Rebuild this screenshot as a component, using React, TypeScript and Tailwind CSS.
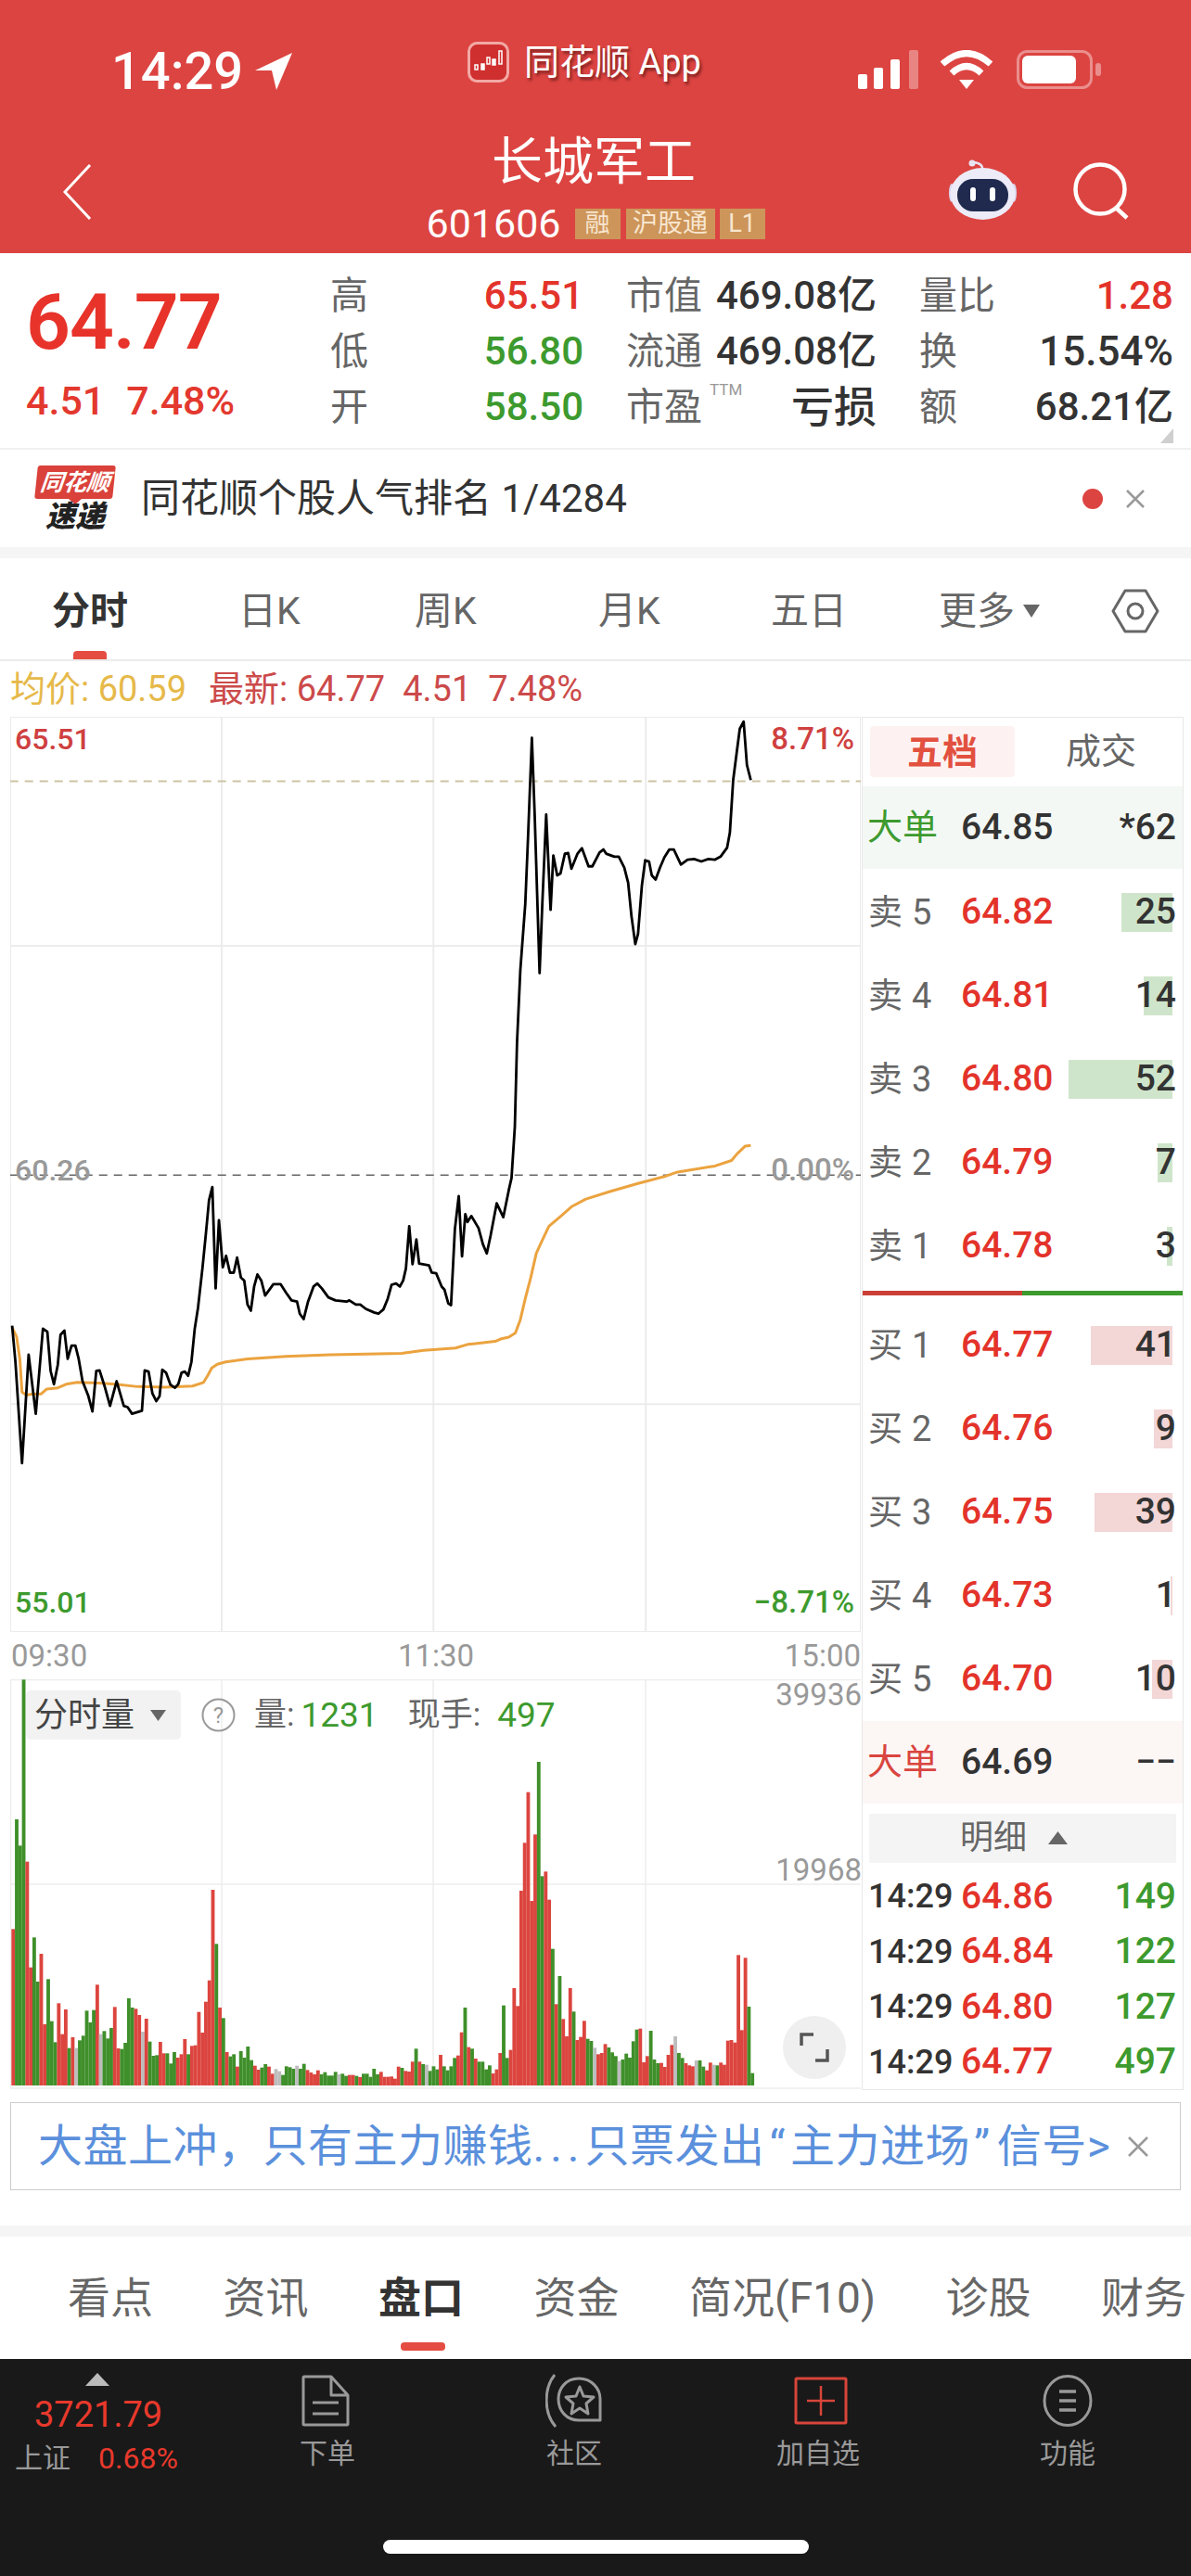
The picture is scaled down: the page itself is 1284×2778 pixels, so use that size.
import React from "react";

const priceLine =
  "22,1030 28,1090 40,1258 52,1078 65,1176 78,1035 86,1040 92,1105 98,1127 105,1095 110,1045 117,1038 123,1085 130,1063 137,1063 143,1085 150,1122 160,1145 168,1172 175,1105 181,1104 190,1130 200,1163 212,1122 225,1163 232,1165 240,1176 258,1171 263,1104 270,1106 277,1142 284,1155 290,1147 295,1103 302,1108 310,1128 318,1133 324,1127 330,1108 336,1106 342,1113 348,1090 354,1035 360,1000 368,935 374,880 380,822 386,800 392,968 398,855 405,933 411,914 418,942 425,942 431,917 438,950 444,955 450,995 456,1005 462,965 468,945 475,955 482,980 490,970 497,961 510,961 520,975 530,988 540,990 545,1010 552,1019 560,990 570,965 577,960 585,968 597,983 610,988 630,990 635,988 647,995 655,995 665,1002 680,1008 688,1010 697,1003 705,985 712,962 720,960 727,965 733,955 738,935 744,865 750,928 757,887 762,927 780,930 785,942 793,943 803,965 808,970 815,993 820,996 827,870 834,815 840,915 846,845 850,858 857,848 870,868 878,895 885,910 892,880 903,827 915,850 925,805 930,785 936,700 940,560 946,440 955,330 960,220 967,55 972,180 981,445 986,330 993,182 1001,340 1006,250 1013,283 1019,280 1027,247 1033,246 1039,272 1050,247 1058,238 1070,268 1077,268 1090,245 1097,240 1102,247 1117,252 1125,252 1135,270 1142,295 1148,350 1155,397 1160,380 1167,300 1173,258 1180,260 1185,283 1192,290 1200,270 1208,253 1217,240 1225,240 1238,265 1250,257 1262,256 1275,260 1288,256 1300,257 1310,252 1322,237 1327,212 1333,125 1340,75 1345,40 1352,28 1358,100 1365,125";
const avgLine =
  "22,1033 30,1048 36,1085 40,1140 48,1145 60,1143 75,1143 85,1135 105,1133 120,1127 140,1124 180,1125 210,1127 250,1131 300,1132 350,1130 370,1124 378,1112 385,1100 395,1094 410,1090 450,1085 520,1081 600,1078 730,1076 770,1071 828,1067 850,1061 900,1056 910,1052 925,1049 937,1042 946,1020 955,985 965,950 975,910 985,890 998,865 1020,848 1040,832 1065,820 1110,807 1160,794 1210,782 1232,775 1300,765 1330,756 1340,745 1355,732 1365,731";

const volA =
  "r360 g5 g90 g-447 r142 r484 g387 g530 r440 r668 g522 g658 g726 r600 r700 r620 g745 r710 x745 g720 g705 g624 g662 g622 r540 x700 g690 g714 g680 r612 r746 g748 g728 g584 g614 r618 r638 x692 r650 g724 g770 g768 r725 r762 g762 g795 g758 r776 r765 r716 g765 r738 r736 r628 r695 r595 r526 r233 g408 r614 g648 r758 g772 g765 r805 g755 g776 g740 g784 r802 r815 g808 g797 r805 r828 x813 x820 g832 g804 g807 g812 x802 g812 g796 r816 r824 r830 r817 g830 g823 g834 g834 g822 x830 g828 g835 r832 r832 g835 r839 g828 g828 g838 g812 g830 r822 r838 r838";
const volB =
  "r1048 r1055 r1016 g1020 r1030 r1032 r1000 g958 r1000 g1008 x1010 g1030 g1015 g1025 r978 g1015 g1028 g1015 g988 r980 r905 g825 r953 g958 r990 g1000 g1000 g1025 g1012 r1038 r1025 r972 g818 g988 r962 r762 r820 r447 r292 r128 r480 r265 g30 g400 r385 r476 g635 r814 g723 r862 r918 r762 g838 r930 r920 r868 g926 g933 x955 r976 r972 r943 g954 g970 g982 x998 g993 g974 g987 g934 g896 r893 r1002 r982 g900 g993 g1005 r1004 r1017 r978 r946 x918 g972 g988 r1005 r1012 r1015 x996 g996 g1016 r1028 r1003 x1010 g1012 r1003 r1010 r932 r930 r938 r655 r898 r664 g822 g1037";

const parseBars = (s: string, base: number) =>
  s.split(" ").map((t) => ({ k: t[0], h: (base - Number(t.slice(1))) / 3 }));
const bars = [...parseBars(volA, 866), ...parseBars(volB, 1077)];
const barColor: Record<string, string> = { r: "#dc453f", g: "#3f8f2a", x: "#bdbdbd" };

const Chart = () => (
  <svg width="917" height="987" viewBox="18.5 20 1546.5 1518" preserveAspectRatio="none" className="block">
    <g fill="none" stroke="#ececec" strokeWidth="2">
      <rect x="18.5" y="20" width="1546.5" height="1518" vectorEffect="non-scaling-stroke" />
      <line x1="403" y1="20" x2="403" y2="1538" vectorEffect="non-scaling-stroke" />
      <line x1="788" y1="20" x2="788" y2="1538" vectorEffect="non-scaling-stroke" />
      <line x1="1174" y1="20" x2="1174" y2="1538" vectorEffect="non-scaling-stroke" />
      <line x1="18" y1="400" x2="1565" y2="400" vectorEffect="non-scaling-stroke" />
      <line x1="18" y1="1160" x2="1565" y2="1160" vectorEffect="non-scaling-stroke" />
    </g>
    <line x1="18" y1="127" x2="1565" y2="127" stroke="#cdc3a3" strokeWidth="2" strokeDasharray="9 7" vectorEffect="non-scaling-stroke" />
    <line x1="18" y1="780" x2="1565" y2="780" stroke="#666" strokeWidth="1.5" strokeDasharray="9 7" vectorEffect="non-scaling-stroke" />
    <polyline points={avgLine} fill="none" stroke="#eba33f" strokeWidth="3" strokeLinejoin="round" vectorEffect="non-scaling-stroke" />
    <polyline points={priceLine} fill="none" stroke="#000" strokeWidth="2.8" strokeLinejoin="round" vectorEffect="non-scaling-stroke" />
  </svg>
);

const Volume = () => (
  <svg width="917" height="442" viewBox="0 0 917 442" className="block">
    <g stroke="#ececec" strokeWidth="1.5">
      <line x1="0" y1="0.5" x2="917" y2="0.5" />
      <line x1="0.5" y1="0" x2="0.5" y2="442" />
      <line x1="228" y1="0" x2="228" y2="442" />
      <line x1="456" y1="0" x2="456" y2="442" />
      <line x1="685" y1="0" x2="685" y2="442" />
      <line x1="0" y1="221" x2="917" y2="221" />
      <line x1="0" y1="441" x2="917" y2="441" />
    </g>
    {bars.map((b, i) => (
      <rect key={i} x={1.3 + i * 3.777} y={438 - b.h} width="3.85" height={b.h} fill={barColor[b.k]} />
    ))}
  </svg>
);

type Row = { l: string; n: string; p: string; q: string; w: number };
const sells: Row[] = [
  { l: "卖", n: "5", p: "64.82", q: "25", w: 55 },
  { l: "卖", n: "4", p: "64.81", q: "14", w: 31 },
  { l: "卖", n: "3", p: "64.80", q: "52", w: 112 },
  { l: "卖", n: "2", p: "64.79", q: "7", w: 16 },
  { l: "卖", n: "1", p: "64.78", q: "3", w: 6 },
];
const buys: Row[] = [
  { l: "买", n: "1", p: "64.77", q: "41", w: 88 },
  { l: "买", n: "2", p: "64.76", q: "9", w: 20 },
  { l: "买", n: "3", p: "64.75", q: "39", w: 84 },
  { l: "买", n: "4", p: "64.73", q: "1", w: 2 },
  { l: "买", n: "5", p: "64.70", q: "10", w: 22 },
];

const Depth = ({ r, tone }: { r: Row; tone: "sell" | "buy" }) => (
  <div className="relative flex h-[90px] items-center pl-[6px] pr-[7px]">
    <div
      className={`absolute right-[11px] h-[42px] ${tone === "sell" ? "bg-[#cfe5cb]" : "bg-[#f3d6d6]"}`}
      style={{ width: r.w }}
    />
    <span className="relative w-[100px] text-[37px] leading-none text-[#666]">
      {r.l}
      <span className="ml-[10px] text-[38px]">{r.n}</span>
    </span>
    <span className="relative text-[39px] leading-none font-medium text-[#e3332a]">{r.p}</span>
    <span className="relative ml-auto text-[39px] leading-none font-medium text-[#333]">{r.q}</span>
  </div>
);

const BigRow = ({ color, bg, p, q }: { color: string; bg: string; p: string; q: string }) => (
  <div className={`flex h-[89px] shrink-0 items-center pl-[5px] pr-[7px] ${bg}`}>
    <span className={`w-[101px] text-[38px] leading-none ${color}`}>大单</span>
    <span className="text-[39px] leading-none font-medium text-[#333]">{p}</span>
    <span className="ml-auto text-[39px] leading-none font-medium text-[#333]">{q}</span>
  </div>
);

const Tick = ({ p, q }: { p: string; q: string }) => (
  <div className="flex h-[59.5px] items-center pl-[6px] pr-[7px]">
    <span className="w-[100px] text-[36px] leading-none font-medium text-[#333]">14:29</span>
    <span className="text-[39px] leading-none font-medium text-[#e3332a]">{p}</span>
    <span className="ml-auto text-[39px] leading-none font-medium text-[#3d9a2e]">{q}</span>
  </div>
);

const Stat = ({
  label,
  value,
  color,
  size = "text-[42px]",
  extra,
}: {
  label: string;
  value: string;
  color: string;
  size?: string;
  extra?: React.ReactNode;
}) => (
  <div className="relative flex h-[60px] items-center justify-between">
    <span className="text-[41px] leading-none text-[#666]">{label}</span>
    {extra}
    <span className={`leading-none font-medium ${size} ${color}`}>{value}</span>
  </div>
);

const Badge = ({ t, w }: { t: string; w: string }) => (
  <span className={`flex h-[33px] items-center justify-center bg-[#cd955a] text-[27px] leading-none text-[#f8e6cf] ${w}`}>{t}</span>
);

const Logo = () => (
  <svg width="45" height="44" viewBox="0 0 45 44">
    <rect x="1.5" y="1.5" width="42" height="41" rx="9" fill="#cf2f2f" stroke="#f3a9a5" strokeWidth="3" />
    <g fill="none" stroke="#fff" strokeWidth="1.5">
      <rect x="8" y="25" width="3" height="5" />
      <rect x="15" y="24" width="3" height="6" fill="#fff" />
      <rect x="21" y="17" width="3" height="7" />
      <rect x="27" y="19" width="3" height="6" fill="#fff" />
      <rect x="34" y="10" width="3" height="14" />
    </g>
  </svg>
);

const Robot = () => (
  <svg width="73" height="65" viewBox="0 0 73 65">
    <circle cx="25" cy="4" r="3.5" fill="#e8e4f4" />
    <path d="M26 3 Q37 4 36 11" fill="none" stroke="#e8e4f4" strokeWidth="2.5" />
    <ellipse cx="3" cy="36" rx="3" ry="10" fill="#d9d6ee" />
    <ellipse cx="70" cy="36" rx="3" ry="10" fill="#d9d6ee" />
    <ellipse cx="36.5" cy="37" rx="35" ry="28" fill="#ecebf7" />
    <rect x="9" y="21" width="55" height="35" rx="17" fill="#1f2a4e" />
    <rect x="23" y="30" width="6" height="15" rx="3" fill="#fff" />
    <rect x="44" y="30" width="6" height="15" rx="3" fill="#fff" />
  </svg>
);

export default function App() {
  return (
    <div className="flex h-[2778px] w-[1284px] flex-col overflow-hidden bg-white font-[Roboto,'Noto_Sans_CJK_SC',sans-serif]">
      {/* header */}
      <div className="h-[273px] shrink-0 bg-[#dc4441] text-white">
        <div className="flex h-[130px] items-start pl-[120px] pt-[45px]">
          <div className="mt-[12px] flex w-[384px] items-start">
            <span className="text-[56px] leading-[40px] font-medium">14:29</span>
            <svg width="41" height="40" viewBox="0 0 41 40" className="ml-[13px]">
              <polygon points="40,0 0,19 18,19 23,40" fill="#fff" />
            </svg>
          </div>
          <div className="flex w-[421px] items-center">
            <Logo />
            <span className="ml-[16px] text-[38px] leading-[44px] [text-shadow:2px_3px_3px_rgba(90,20,20,.7)]">同花顺 App</span>
          </div>
          <div className="mt-[9px] flex items-start">
            <svg width="66" height="42" viewBox="0 0 66 42">
              <rect x="0" y="26" width="10" height="16" rx="2" fill="#fff" />
              <rect x="17" y="19" width="10" height="23" rx="2" fill="#fff" />
              <rect x="35" y="10" width="10" height="32" rx="2" fill="#fff" />
              <rect x="55" y="0" width="10" height="42" rx="2" fill="#fff" fillOpacity="0.35" />
            </svg>
            <svg width="58" height="42" viewBox="0 0 58 42" className="ml-[22px]">
              <g fill="none" stroke="#fff" strokeWidth="7">
                <path d="M3 15 Q29 -8 55 15" />
                <path d="M13 25 Q29 10 45 25" />
              </g>
              <polygon points="21,32 37,32 29,42" fill="#fff" />
            </svg>
            <svg width="92" height="42" viewBox="0 0 92 42" className="ml-[25px]">
              <rect x="1.5" y="1.5" width="79" height="39" rx="10" fill="none" stroke="#fff" strokeOpacity="0.4" strokeWidth="3" />
              <rect x="6" y="6" width="58" height="30" rx="6" fill="#fff" />
              <rect x="85" y="14" width="6" height="14" rx="3" fill="#fff" fillOpacity="0.4" />
            </svg>
          </div>
        </div>
        <div className="flex h-[143px] items-start">
          <div className="w-[270px] pl-[67px] pt-[47px]">
            <svg width="32" height="60" viewBox="0 0 32 60">
              <polyline points="30,1 3,30 30,59" fill="none" stroke="#fff" strokeWidth="3" />
            </svg>
          </div>
          <div className="flex w-[744px] flex-col items-center pt-[14px]">
            <div className="ml-[-4px] text-[55px] leading-[60px]">长城军工</div>
            <div className="mt-[21px] flex items-center">
              <span className="mr-[15px] text-[43px] leading-[33px]">601606</span>
              <Badge t="融" w="w-[49px]" />
              <span className="w-[6px]" />
              <Badge t="沪股通" w="w-[96px]" />
              <span className="w-[5px]" />
              <Badge t="L1" w="w-[49px]" />
            </div>
          </div>
          <div className="ml-[9px] pt-[42px]">
            <Robot />
          </div>
          <div className="ml-[60px] pt-[45px]">
            <svg width="64" height="62" viewBox="0 0 64 62">
              <circle cx="30" cy="29" r="26.5" fill="none" stroke="#fff" strokeWidth="4.5" />
              <line x1="47" y1="49" x2="59" y2="60" stroke="#fff" strokeWidth="4.5" />
            </svg>
          </div>
        </div>
      </div>

      {/* quote */}
      <div className="flex h-[212px] shrink-0 border-b-2 border-[#f0f0f0]">
        <div className="w-[356px] pl-[28px] pt-[32px]">
          <div className="text-[84px] leading-[86px] font-semibold tracking-[-1px] text-[#e7332a]">64.77</div>
          <div className="mt-[18px] flex text-[43px] leading-[46px] font-medium text-[#e3382e]">
            <span>4.51</span>
            <span className="ml-[23px]">7.48%</span>
          </div>
        </div>
        <div className="grid grid-cols-[273px_270px_274px] content-start gap-x-[46px] pt-[16px]">
          <Stat label="高" value="65.51" color="text-[#e3332a]" />
          <Stat label="市值" value="469.08亿" color="text-[#333]" />
          <Stat label="量比" value="1.28" color="text-[#e3332a]" />
          <Stat label="低" value="56.80" color="text-[#3d9a2e]" />
          <Stat label="流通" value="469.08亿" color="text-[#333]" />
          <Stat label="换" value="15.54%" color="text-[#333]" size="text-[44px]" />
          <Stat label="开" value="58.50" color="text-[#3d9a2e]" />
          <Stat
            label="市盈"
            value="亏损"
            color="text-[#333]"
            size="text-[46px]"
            extra={<span className="absolute left-[90px] top-[3px] text-[17px] leading-none text-[#999]">TTM</span>}
          />
          <Stat label="额" value="68.21亿" color="text-[#333]" />
        </div>
        <div className="relative w-0">
          <svg width="16" height="16" viewBox="0 0 16 16" className="absolute left-[-16px] top-[189px]">
            <polygon points="16,0 16,16 2,16" fill="#cfcfcf" />
          </svg>
        </div>
      </div>

      {/* notification */}
      <div className="flex h-[105px] shrink-0 items-center pl-[37px] pr-[49px]">
        <div className="flex w-[88px] flex-col items-center">
          <div className="flex h-[36px] w-[84px] -skew-x-6 items-center justify-center rounded-[3px] bg-[#d9413a] text-[25px] leading-none font-bold italic text-white">
            同花顺
          </div>
          <div className="h-0 w-0 border-x-[7px] border-t-[6px] border-x-transparent border-t-[#d9413a]" />
          <div className="mt-[-3px] text-[32px] leading-[32px] font-black italic text-[#222]">速递</div>
        </div>
        <span className="ml-[27px] text-[42px] leading-none text-[#333]">同花顺个股人气排名 1/4284</span>
        <span className="ml-auto h-[22px] w-[22px] rounded-full bg-[#dc4441]" />
        <svg width="22" height="22" viewBox="0 0 22 22" className="ml-[24px]">
          <path d="M2 2 L20 20 M20 2 L2 20" stroke="#999" strokeWidth="2.5" />
        </svg>
      </div>
      <div className="h-[12px] shrink-0 bg-[#f5f5f5]" />

      {/* period tabs */}
      <div className="relative flex h-[111px] shrink-0 items-center border-b-2 border-[#ececec] pl-[56px] pt-[5px] text-[41px] leading-none text-[#666]">
        <span className="w-[201px] font-bold text-[#333]">分时</span>
        <span className="w-[190px]">日K</span>
        <span className="w-[198px]">周K</span>
        <span className="w-[186px]">月K</span>
        <span className="w-[181px]">五日</span>
        <span className="flex w-[186px] items-center">
          更多
          <svg width="18" height="14" viewBox="0 0 18 14" className="ml-[9px]">
            <polygon points="0,0 18,0 9,14" fill="#666" />
          </svg>
        </span>
        <svg width="52" height="48" viewBox="0 0 52 48">
          <polygon points="15,2 37,2 50,24 37,46 15,46 2,24" fill="none" stroke="#666" strokeWidth="3" strokeLinejoin="round" />
          <circle cx="26" cy="24" r="8" fill="none" stroke="#666" strokeWidth="3" />
        </svg>
        <span className="absolute bottom-0 left-[79px] h-[9px] w-[36px] rounded-t-[4px] bg-[#e54d42]" />
      </div>

      {/* info line */}
      <div className="flex h-[60px] shrink-0 items-center pl-[11px] text-[38px] leading-none">
        <span className="text-[#e6b94a]">均价: 60.59</span>
        <span className="ml-[24px] text-[#cc4a4a]">最新: 64.77</span>
        <span className="ml-[19px] text-[#cc4a4a]">4.51</span>
        <span className="ml-[18px] text-[#cc4a4a]">7.48%</span>
      </div>

      {/* chart + depth */}
      <div className="flex h-[1481px] shrink-0 pl-[11px]">
        <div className="flex w-[918px] flex-col">
          <div className="relative h-[987px]">
            <Chart />
            <span className="absolute left-[5px] top-[8px] text-[32px] leading-[32px] font-medium text-[#cf4040]">65.51</span>
            <span className="absolute right-[8px] top-[8px] text-[33px] leading-[32px] font-medium text-[#cf4040]">8.71%</span>
            <span className="absolute left-[5px] top-[473px] text-[32px] leading-[32px] font-medium text-[#999]">60.26</span>
            <span className="absolute right-[8px] top-[473px] text-[33px] leading-[32px] font-medium text-[#999]">0.00%</span>
            <span className="absolute left-[5px] top-[939px] text-[32px] leading-[32px] font-medium text-[#3d9a2e]">55.01</span>
            <span className="absolute right-[8px] top-[939px] text-[33px] leading-[32px] font-medium text-[#3d9a2e]">−8.71%</span>
          </div>
          <div className="flex h-[51px] items-center justify-between pl-[1px] pr-[1px] text-[33px] leading-none text-[#999]">
            <span>09:30</span>
            <span>11:30</span>
            <span>15:00</span>
          </div>
          <div className="relative h-[443px]">
            <Volume />
            <div className="absolute left-[17px] top-[12px] flex items-center text-[35px] leading-none text-[#666]">
              <div className="flex h-[53px] w-[167px] items-center rounded-[5px] bg-[#f2f2f2] pl-[9px] text-[#444]">
                <span className="text-[36px]">分时量</span>
                <svg width="17" height="12" viewBox="0 0 17 12" className="ml-[17px]">
                  <polygon points="0,0 17,0 8.5,12" fill="#666" />
                </svg>
              </div>
              <svg width="37" height="37" viewBox="0 0 37 37" className="ml-[22px]">
                <circle cx="18.5" cy="18.5" r="17" fill="none" stroke="#999" strokeWidth="2" />
                <text x="18.5" y="27" textAnchor="middle" fontSize="24" fill="#999">?</text>
              </svg>
              <span className="ml-[20px]">量: </span>
              <span className="ml-[7px] text-[37px] text-[#3d9a2e]">1231</span>
              <span className="ml-[32px]">现手: </span>
              <span className="ml-[18px] text-[37px] text-[#3d9a2e]">497</span>
            </div>
            <span className="absolute right-0 top-0 text-[33px] leading-[34px] text-[#999]">39936</span>
            <span className="absolute right-0 top-[189px] text-[33px] leading-[34px] text-[#999]">19968</span>
            <div className="absolute left-[833px] top-[363px] flex h-[68px] w-[68px] items-center justify-center rounded-full bg-[#efefef]">
              <svg width="32" height="32" viewBox="0 0 32 32">
                <path d="M2 14 V2 H15 M30 18 V30 H17" fill="none" stroke="#555" strokeWidth="3.5" />
              </svg>
            </div>
          </div>
        </div>
        <div className="flex h-[1481px] w-[347px] flex-col overflow-hidden border-[1.5px] border-[#e8e8e8]">
          <div className="flex h-[73.5px] shrink-0 items-start pl-[8px] pt-[9px] text-[38px] leading-none">
            <span className="flex h-[55px] w-[156px] items-center justify-center rounded-[4px] bg-[#fdf2f1] font-bold text-[#e2503f]">五档</span>
            <span className="ml-[55px] mt-[8px] text-[#666]">成交</span>
          </div>
          <BigRow color="text-[#3d9a2e]" bg="bg-[#f3f8f4]" p="64.85" q="*62" />
          <div className="h-[2px] shrink-0" />
          <div className="flex shrink-0 flex-col">
            {sells.map((r) => (
              <Depth key={r.n} r={r} tone="sell" />
            ))}
          </div>
          <div className="mt-[3px] flex h-[5px] shrink-0">
            <div className="w-[172px] bg-[#cc3f36]" />
            <div className="flex-1 bg-[#3d9a2e]" />
          </div>
          <div className="h-[9px] shrink-0" />
          <div className="flex shrink-0 flex-col">
            {buys.map((r) => (
              <Depth key={r.n} r={r} tone="buy" />
            ))}
          </div>
          <BigRow color="text-[#d9453f]" bg="bg-[#fcf6f5]" p="64.69" q="−−" />
          <div className="mx-[7px] mt-[11px] flex h-[53px] shrink-0 items-center rounded-[2px] bg-[#f4f4f4] pl-[98px] text-[36px] leading-none text-[#666]">
            明细
            <svg width="21" height="14" viewBox="0 0 21 14" className="ml-[23px]">
              <polygon points="0,14 21,14 10.5,0" fill="#666" />
            </svg>
          </div>
          <div className="mt-[7px] flex shrink-0 flex-col">
            <Tick p="64.86" q="149" />
            <Tick p="64.84" q="122" />
            <Tick p="64.80" q="127" />
            <Tick p="64.77" q="497" />
          </div>
        </div>
      </div>

      {/* banner */}
      <div className="mx-[11px] mt-[13px] flex h-[95px] shrink-0 items-center border-[1.5px] border-[#cccccc] pl-[29px] pr-[33px] text-[48px] leading-none text-[#5b90dc]">
        <span className="whitespace-nowrap tracking-[0.5px]">
          大盘上冲，只有主力赚钱<span className="tracking-[6px]">...</span>只票发出
          <span className="ml-[5px] mr-[5px]">“</span>主力进场<span className="ml-[4px] mr-[7px]">”</span>信号&gt;
        </span>
        <svg width="24" height="24" viewBox="0 0 24 24" className="ml-auto shrink-0">
          <path d="M2 2 L22 22 M22 2 L2 22" stroke="#999" strokeWidth="2.5" />
        </svg>
      </div>
      <div className="mt-[38px] h-[12px] shrink-0 bg-[#f5f5f5]" />

      {/* section tabs */}
      <div className="relative flex h-[132px] shrink-0 items-center gap-[75.5px] overflow-hidden whitespace-nowrap pl-[73px] text-[46px] leading-none text-[#666]">
        <span>看点</span>
        <span>资讯</span>
        <span className="font-bold text-[#333]">盘口</span>
        <span>资金</span>
        <span>简况(F10)</span>
        <span>诊股</span>
        <span>财务</span>
        <span className="absolute bottom-[9px] left-[432px] h-[9px] w-[48px] rounded-[4px] bg-[#e54d42]" />
      </div>

      {/* bottom nav */}
      <div className="flex h-[234px] shrink-0 flex-col bg-[#191919]">
        <div className="flex h-[195px] text-[30px] leading-none text-[#999]">
          <div className="flex w-[220px] flex-col pl-[16px] pt-[15px]">
            <div className="ml-[76px] h-0 w-0 border-x-[13px] border-b-[14px] border-x-transparent border-b-[#bbbbbb]" />
            <div className="ml-[21px] mt-[15px] text-[38px] leading-[32px] text-[#e8392c]">3721.79</div>
            <div className="mt-[15px] flex items-center">
              <span>上证</span>
              <span className="ml-[30px] text-[32px] text-[#e8392c]">0.68%</span>
            </div>
          </div>
          <div className="flex w-[266px] flex-col items-center pt-[17px]">
            <svg width="52" height="56" viewBox="0 0 52 56" className="ml-[-4px]">
              <g fill="none" stroke="#999" strokeWidth="3" strokeLinejoin="round">
                <path d="M3 2 H32 L50 22 V53 a1 1 0 0 1 -1 1 H3 a1 1 0 0 1 -1 -1 V3 a1 1 0 0 1 1 -1 Z" />
                <path d="M32 2 V22 H50" />
                <path d="M12 30 H40 M12 42 H40" />
              </g>
            </svg>
            <span className="mt-[14px]">下单</span>
          </div>
          <div className="flex w-[266px] flex-col items-center pt-[16px]">
            <svg width="62" height="58" viewBox="0 0 62 58">
              <g fill="none" stroke="#999" strokeWidth="3" strokeLinejoin="round">
                <path d="M10 1 C-2 16 -2 42 11 57" />
                <path d="M36 5 C22 5 14 16 14 27 C14 40 23 50 36 50 H59 V27 C59 16 50 5 36 5 Z" />
                <polygon points="37,14 41,24 52,25 44,32 46,43 37,37 28,43 30,32 22,25 33,24" />
              </g>
            </svg>
            <span className="mt-[13px]">社区</span>
          </div>
          <div className="flex w-[266px] flex-col items-center pt-[19px]">
            <svg width="58" height="52" viewBox="0 0 58 52">
              <rect x="2" y="2" width="54" height="48" rx="1" fill="none" stroke="#d8453a" strokeWidth="3" />
              <path d="M14 26 H44 M29 10 V42" stroke="#d8453a" strokeWidth="2.5" />
            </svg>
            <span className="mt-[16px] ml-[-6px]">加自选</span>
          </div>
          <div className="flex w-[266px] flex-col items-center pt-[17px]">
            <svg width="54" height="56" viewBox="0 0 54 56">
              <ellipse cx="27" cy="28" rx="25" ry="26.5" fill="none" stroke="#999" strokeWidth="3" />
              <path d="M18 18 H36 M18 28 H36 M18 38 H36" stroke="#999" strokeWidth="3.5" />
            </svg>
            <span className="mt-[14px]">功能</span>
          </div>
        </div>
        <div className="mx-auto h-[15px] w-[459px] rounded-full bg-white" />
      </div>
    </div>
  );
}
